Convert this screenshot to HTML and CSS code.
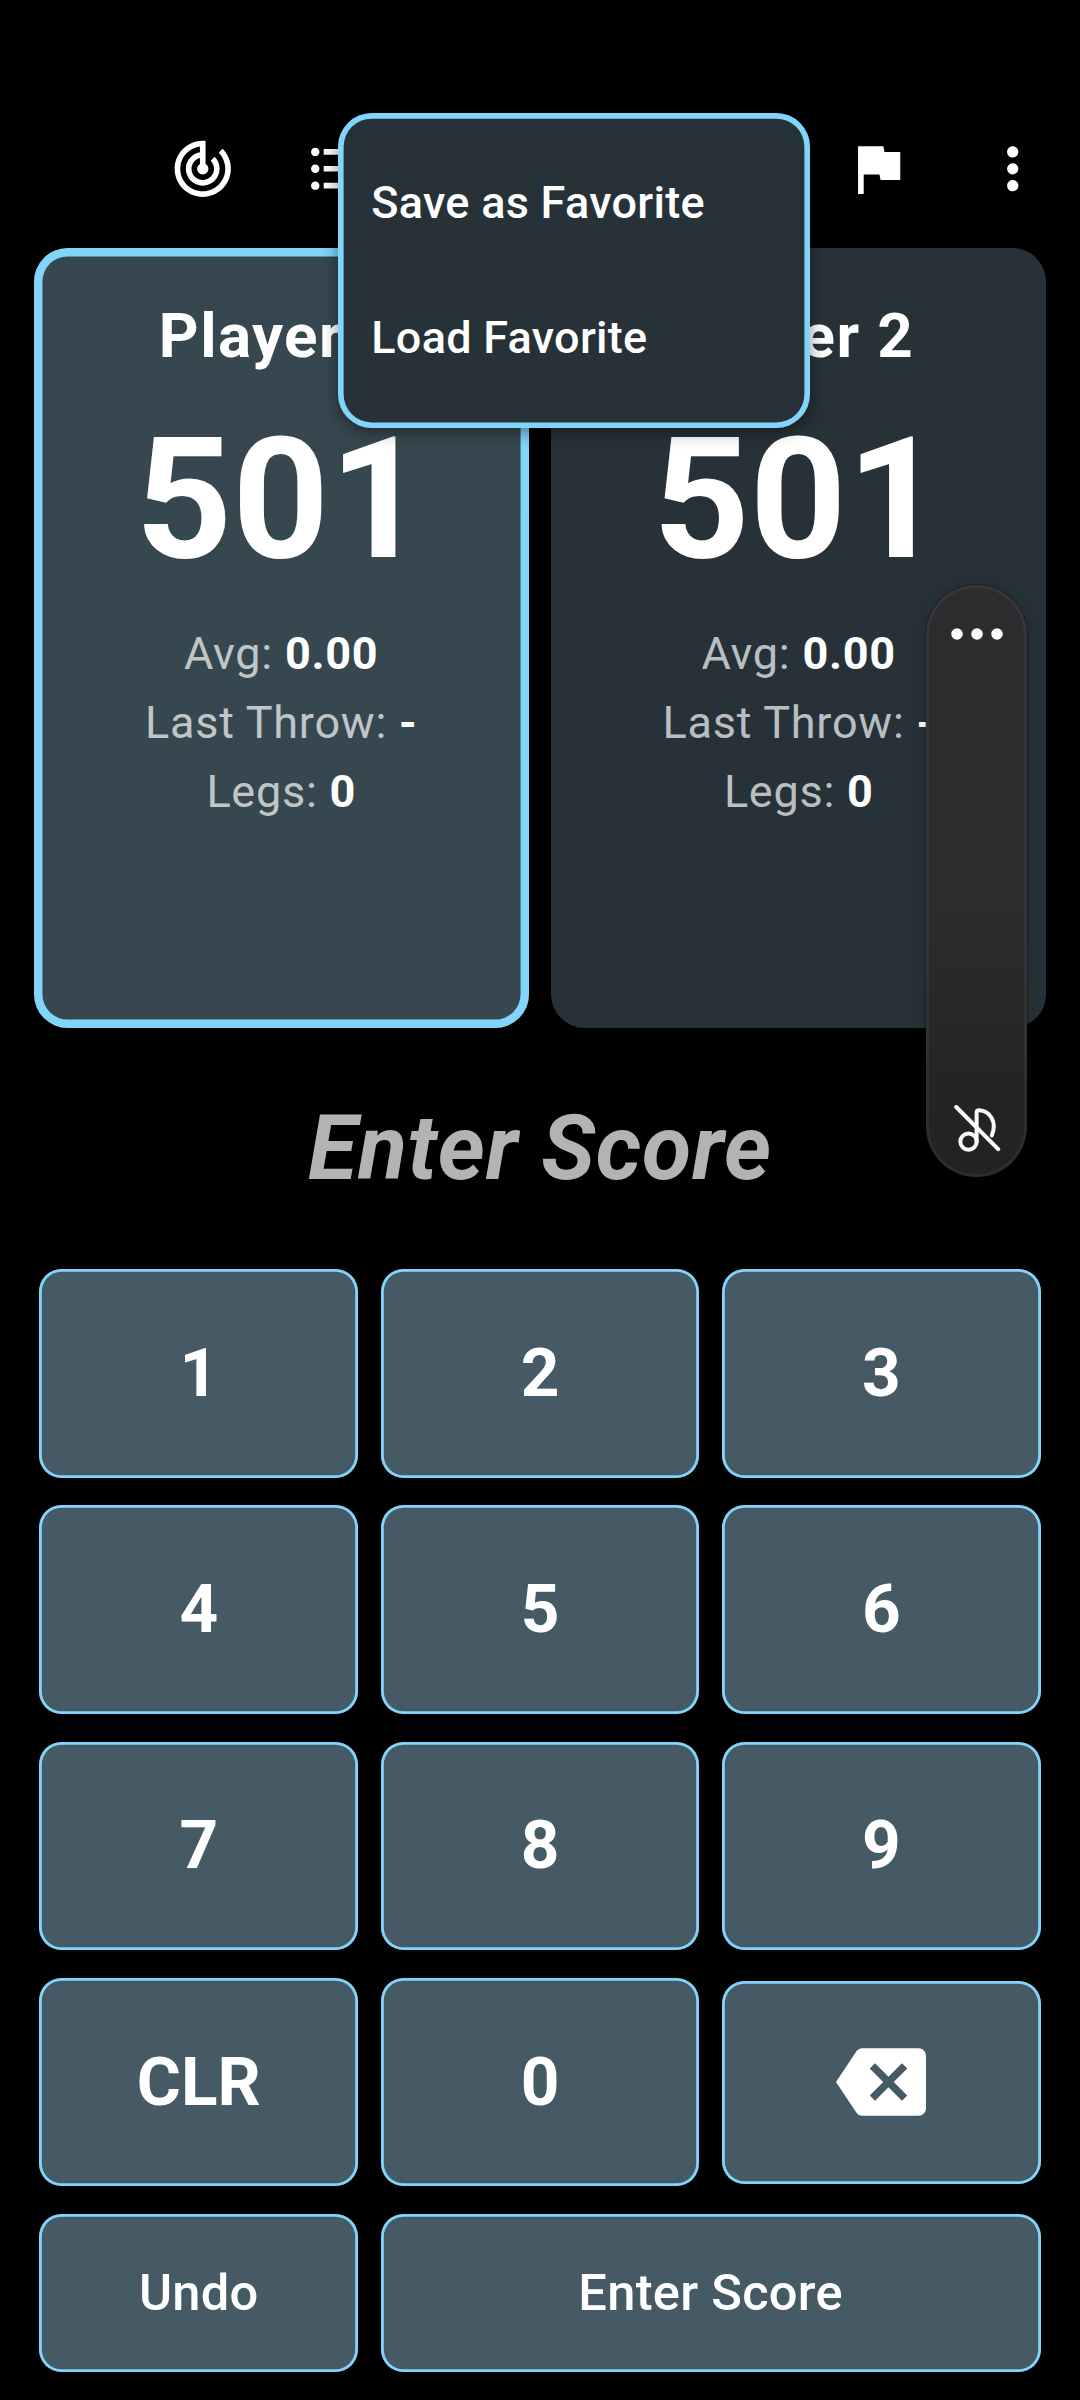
FILE: index.html
```html
<!DOCTYPE html>
<html lang="en">
<head>
<meta charset="utf-8">
<title>Darts Scoreboard</title>
<link rel="stylesheet" href="styles.css">
</head>
<body>
<main class="screen">
  <header class="appbar">
    <button class="icon-btn" aria-label="Target"><svg class="icon" viewBox="0 0 24 24"><path d="M19.07 4.93l-1.41 1.41C19.1 7.79 20 9.79 20 12c0 4.42-3.58 8-8 8s-8-3.58-8-8c0-4.08 3.05-7.44 7-7.93v2.02C8.16 6.57 6 9.03 6 12c0 3.31 2.69 6 6 6s6-2.69 6-6c0-1.66-.67-3.16-1.76-4.24l-1.41 1.41C15.55 9.9 16 10.9 16 12c0 2.21-1.79 4-4 4s-4-1.79-4-4c0-1.86 1.28-3.41 3-3.86v2.14c-.6.35-1 .98-1 1.72 0 1.1.9 2 2 2s2-.9 2-2c0-.74-.4-1.38-1-1.72V2h-1C6.48 2 2 6.48 2 12s4.48 10 10 10 10-4.48 10-10c0-2.76-1.12-5.26-2.93-7.07z"/></svg></button>
    <button class="icon-btn" aria-label="List"><svg class="icon" viewBox="0 0 24 24"><path d="M4 10.5c-.83 0-1.5.67-1.5 1.5s.67 1.5 1.5 1.5 1.5-.67 1.5-1.5-.67-1.5-1.5-1.5zm0-6c-.83 0-1.5.67-1.5 1.5S3.17 7.5 4 7.5 5.5 6.83 5.5 6 4.83 4.5 4 4.5zm0 12c-.83 0-1.5.68-1.5 1.5s.68 1.5 1.5 1.5 1.5-.68 1.5-1.5-.67-1.5-1.5-1.5zM7 19h14v-2H7v2zm0-6h14v-2H7v2zm0-8v2h14V5H7z"/></svg></button>
    <button class="icon-btn icon-btn--end" aria-label="Finish"><svg class="icon" viewBox="0 0 24 24"><path d="M14.4 6L14 4H5v17h2v-7h5.6l.4 2h7V6z"/></svg></button>
    <button class="icon-btn" aria-label="More"><svg class="icon" viewBox="0 0 24 24"><path d="M12 8c1.1 0 2-.9 2-2s-.9-2-2-2-2 .9-2 2 .9 2 2 2zm0 2c-1.1 0-2 .9-2 2s.9 2 2 2 2-.9 2-2-.9-2-2-2zm0 6c-1.1 0-2 .9-2 2s.9 2 2 2 2-.9 2-2-.9-2-2-2z"/></svg></button>
  </header>

  <section class="players">
    <article class="player player--active">
      <h2 class="player-name">Player 1</h2>
      <div class="player-score">501</div>
      <p class="stat">Avg: <b>0.00</b></p>
      <p class="stat">Last Throw: <b>-</b></p>
      <p class="stat">Legs: <b>0</b></p>
    </article>
    <article class="player">
      <h2 class="player-name">Player 2</h2>
      <div class="player-score">501</div>
      <p class="stat">Avg: <b>0.00</b></p>
      <p class="stat">Last Throw: <b>-</b></p>
      <p class="stat">Legs: <b>0</b></p>
    </article>
  </section>

  <div class="entry">Enter Score</div>

  <section class="keypad">
    <button class="key">1</button>
    <button class="key">2</button>
    <button class="key">3</button>
    <button class="key">4</button>
    <button class="key">5</button>
    <button class="key">6</button>
    <button class="key">7</button>
    <button class="key">8</button>
    <button class="key">9</button>
    <button class="key">CLR</button>
    <button class="key">0</button>
    <button class="key key--erase" aria-label="Backspace"><svg class="erase-icon" viewBox="0 0 24 24"><path d="M22 3H7c-.69 0-1.23.35-1.59.88L0 12l5.41 8.11c.36.53.9.89 1.59.89h15c1.1 0 2-.9 2-2V5c0-1.1-.9-2-2-2zm-3 12.59L17.59 17 14 13.41 10.41 17 9 15.59 12.59 12 9 8.41 10.41 7 14 10.59 17.59 7 19 8.41 15.41 12 19 15.59z"/></svg></button>
    <button class="key key--text">Undo</button>
    <button class="key key--text key--wide">Enter Score</button>
  </section>

  <div class="menu" role="menu">
    <div class="menu-item" role="menuitem">Save as Favorite</div>
    <div class="menu-item" role="menuitem">Load Favorite</div>
  </div>

  <aside class="volume">
    <svg class="volume-dots" viewBox="0 0 52 12"><circle cx="6" cy="6" r="5.8"/><circle cx="26" cy="6" r="5.8"/><circle cx="46" cy="6" r="5.8"/></svg>
    <svg class="volume-note" viewBox="0 0 48 48"><circle cx="15.5" cy="36.6" r="8.2"/><path d="M23.6 36.6V7.5Q23.6 5.2 26 5.3C37 5.8 44.5 17 38.8 30.5"/><path d="M3.2 2l42 42.2"/></svg>
  </aside>
</main>
</body>
</html>
```
FILE: styles.css
```css
* { box-sizing: border-box; margin: 0; padding: 0; }

body {
  background: #000;
  color: #fff;
  font-family: Roboto, sans-serif;
}

button {
  border: 0;
  background: none;
  color: inherit;
  font: inherit;
}

.screen {
  position: relative;
  width: 1080px;
  height: 2400px;
  overflow: hidden;
  background: #000;
}

/* App bar */
.appbar {
  display: flex;
  height: 247.5px;
  padding: 101.5px 0 0 135px;
}

.icon-btn {
  display: flex;
  align-items: center;
  justify-content: center;
  width: 135px;
  height: 135px;
}

.icon-btn--end { margin-left: auto; }
.icon { width: 67.5px; height: 67.5px; fill: #fff; }

/* Player cards */
.players {
  display: flex;
  gap: 22.5px;
  height: 780px;
  padding: 0 33.75px;
}

.player {
  flex: 1;
  padding-top: 49px;
  border-radius: 33.75px;
  background: #263238;
  text-align: center;
}

.player--active {
  background: #37474f;
  box-shadow: inset 0 0 0 8.44px #81d4fa;
}

.player-name {
  padding-right: 7px;
  font-size: 61.875px;
  font-weight: 700;
  line-height: 78px;
  letter-spacing: 1.4px;
}

.player-score {
  margin-top: 22px;
  padding-right: 1px;
  font-size: 168.75px;
  font-weight: 700;
  line-height: 204px;
}

.stat {
  color: rgba(255, 255, 255, 0.7);
  font-size: 45px;
  line-height: 69px;
  letter-spacing: 0.75px;
}

.player-score + .stat { margin-top: 18px; }
.stat b { color: #fff; font-weight: 700; }

/* Current entry */
.entry {
  height: 241.6px;
  color: #b3b3b3;
  font-size: 90px;
  font-style: italic;
  font-weight: 700;
  line-height: 241px;
  letter-spacing: 0.75px;
  text-align: center;
}

/* Keypad */
.keypad {
  display: grid;
  grid-template-columns: repeat(3, 318.75px);
  grid-template-rows: repeat(4, 208.65px) 157.6px;
  gap: 27.6px 22.5px;
  padding-left: 39.38px;
}

.key {
  display: flex;
  align-items: center;
  justify-content: center;
  padding-bottom: 2px;
  border-radius: 22.5px;
  background: #455a64;
  box-shadow: inset 0 0 0 2.81px #81d4fa;
  font-size: 67.5px;
  font-weight: 700;
}

.key--erase { margin: 2.81px 0; padding-bottom: 0; }
.erase-icon { width: 90px; height: 90px; fill: #fff; }

.key--text {
  padding-bottom: 0;
  font-size: 50.625px;
  font-weight: 500;
  letter-spacing: 0.281px;
}

.key--wide { grid-column: span 2; }

/* Popup menu */
.menu {
  position: absolute;
  top: 112.5px;
  left: 337.5px;
  width: 472.5px;
  height: 315px;
  padding: 22.5px 33.75px;
  border-radius: 33.75px;
  background: #263238;
  box-shadow: inset 0 0 0 5.625px #81d4fa, 0 4px 16px rgba(0, 0, 0, 0.45);
}

.menu-item {
  height: 135px;
  font-size: 45px;
  font-weight: 500;
  line-height: 135px;
  letter-spacing: 0.281px;
  white-space: nowrap;
}

/* Volume overlay */
.volume {
  position: absolute;
  top: 585px;
  left: 926px;
  display: flex;
  flex-direction: column;
  align-items: center;
  justify-content: space-between;
  width: 101px;
  height: 592px;
  padding: 43px 0 24px;
  border-radius: 51px;
  background: linear-gradient(#2c2c2e 0%, #2c2c2e 55%, #232424 85%, #222 100%);
  box-shadow: inset 0 0 0 3px rgba(255, 255, 255, 0.05), 0 0 0 1px rgba(0, 0, 0, 0.25), 0 0 14px rgba(0, 0, 0, 0.18);
}

.volume-dots { width: 52px; height: 12px; fill: #fafafa; }

.volume-note {
  width: 48px;
  height: 48px;
  fill: none;
  stroke: #fafafa;
  stroke-width: 4;
  stroke-linecap: round;
  stroke-linejoin: round;
}
```
